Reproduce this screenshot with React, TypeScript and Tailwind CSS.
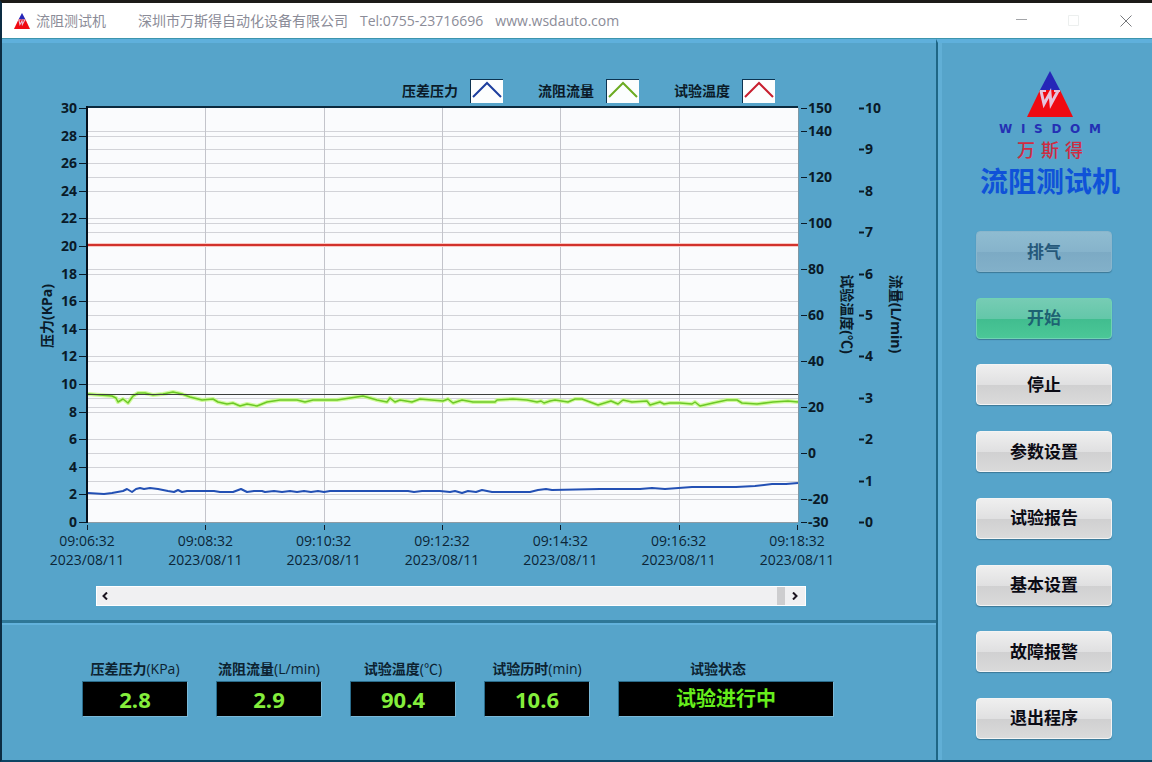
import React from "react";

const SANS = "font-['Open_Sans','Noto_Sans_CJK_SC',sans-serif]";

const legend = [
  { label: "压差压力", color: "#1d3f9e" },
  { label: "流阻流量", color: "#6cab22" },
  { label: "试验温度", color: "#c8202f" },
];

const readouts = [
  { id: "pressure", label: "压差压力", unit: "(KPa)", value: "2.8" },
  { id: "flow", label: "流阻流量", unit: "(L/min)", value: "2.9" },
  { id: "temperature", label: "试验温度", unit: "(℃)", value: "90.4" },
  { id: "elapsed", label: "试验历时", unit: "(min)", value: "10.6" },
];

const actions = [
  { label: "排气", kind: "disabled" },
  { label: "开始", kind: "running" },
  { label: "停止", kind: "normal" },
  { label: "参数设置", kind: "normal" },
  { label: "试验报告", kind: "normal" },
  { label: "基本设置", kind: "normal" },
  { label: "故障报警", kind: "normal" },
  { label: "退出程序", kind: "normal" },
];

const buttonStyles: Record<string, string> = {
  disabled:
    "border-[#8ab6cc] bg-[linear-gradient(#8fbcd1_0%,#86b3cb_50%,#7caac4_51%,#82b0c9_100%)] text-[#25587a]",
  running:
    "border-[#6fd3b3] bg-[linear-gradient(#76ccb4_0%,#64c7a9_50%,#41bd8f_51%,#4bc797_100%)] text-[#1d6272]",
  normal:
    "border-[#f4f4f4] bg-[linear-gradient(#efefef_0%,#e0e0e1_50%,#d0d0d1_51%,#dadada_100%)] text-[#0b0b14]",
};

// Plot area
const LEFT = 88;
const RIGHT = 798;
const TOP = 108;
const BOTTOM = 522;
const HEIGHT = BOTTOM - TOP;

const pressureTicks = [0, 2, 4, 6, 8, 10, 12, 14, 16, 18, 20, 22, 24, 26, 28, 30];
const temperatureTicks = [-30, -20, 0, 20, 40, 60, 80, 100, 120, 140, 150];
const flowTicks = [0, 1, 2, 3, 4, 5, 6, 7, 8, 9, 10];
const times = ["09:06:32", "09:08:32", "09:10:32", "09:12:32", "09:14:32", "09:16:32", "09:18:32"];

const pressureY = (v: number) => BOTTOM - (v / 30) * HEIGHT;
const temperatureY = (v: number) => BOTTOM - ((v + 30) / 180) * HEIGHT;
const flowY = (v: number) => BOTTOM - (v / 10) * HEIGHT;
const timeX = (i: number) => LEFT + (i * (RIGHT - LEFT)) / 6;

const gridLines = [
  ...pressureTicks.map(pressureY),
  ...temperatureTicks.map(temperatureY),
  ...flowTicks.map(flowY),
].filter((y) => y > TOP + 1 && y < BOTTOM - 1);

const flowLine =
  "88,394 100,395 112,396 116,398 118,402 123,399 128,403 133,396 138,393 145,393 153,395 163,394 173,392 182,394 190,397 202,400 213,399 218,402 227,404 233,403 240,406 247,404 257,406 267,402 280,400 297,400 305,402 313,400 337,400 350,398 363,396 377,400 387,402 390,398 395,402 400,400 412,402 420,399 443,401 448,399 453,403 462,400 473,402 495,402 497,400 513,399 527,400 537,402 541,401 544,403 550,401 555,400 568,402 575,399 582,399 590,402 598,405 611,401 618,404 623,400 632,402 647,401 650,405 660,402 664,404 670,403 680,403 692,404 695,402 700,406 713,403 727,400 737,400 742,403 757,404 773,402 788,401 798,402";

const pressureLine =
  "88,493 104,494 112,493 123,491 127,489 132,492 136,489 140,488 144,489 150,488 158,489 168,491 174,492 178,490 182,492 187,491 214,491 220,492 233,492 241,489 247,492 254,491 262,491 265,492 274,491 282,492 290,491 297,492 304,491 311,492 318,491 324,492 330,491 408,491 414,492 422,491 440,491 450,492 455,491 462,493 468,491 476,492 482,490 492,492 530,492 538,490 546,489 552,490 600,489 640,489 652,488 665,489 692,487 736,487 755,486 772,484 786,484 798,483";

const Chart = () => (
  <svg viewBox="2 103 934 469" className="block w-full overflow-visible text-[14px]" role="img" aria-label="压力 / 试验温度 / 流量">
    <rect x={LEFT} y={TOP} width={RIGHT - LEFT} height={HEIGHT} fill="#fafbfd" />

    {gridLines.map((y, i) => (
      <line key={i} x1={LEFT} x2={RIGHT} y1={Math.round(y) + 0.5} y2={Math.round(y) + 0.5} stroke="#d2d3d8" />
    ))}
    {[1, 2, 3, 4, 5].map((i) => (
      <line key={i} x1={Math.round(timeX(i)) - 0.5} x2={Math.round(timeX(i)) - 0.5} y1={TOP} y2={BOTTOM} stroke="#c3c4cb" />
    ))}

    {/* Temperature */}
    <line x1={LEFT} x2={RIGHT} y1={245} y2={245} stroke="#f9c9c4" strokeWidth={4} />
    <line x1={LEFT} x2={RIGHT} y1={245} y2={245} stroke="#d2322c" strokeWidth={2} />

    {/* Flow */}
    <polyline points={flowLine} fill="none" stroke="#c6fb84" strokeWidth={4} strokeLinejoin="round" opacity={0.8} />
    <polyline points={flowLine} fill="none" stroke="#6cc926" strokeWidth={1.5} strokeLinejoin="round" />
    <line x1={LEFT} x2={RIGHT} y1={394.5} y2={394.5} stroke="#3c3f3c" />

    {/* Pressure */}
    <polyline points={pressureLine} fill="none" stroke="#2350b4" strokeWidth={2} strokeLinejoin="round" />

    {/* Frame */}
    <line x1={LEFT} x2={RIGHT} y1={BOTTOM + 0.5} y2={BOTTOM + 0.5} stroke="#8d9ba4" />
    <line x1={RIGHT + 0.5} x2={RIGHT + 0.5} y1={TOP} y2={BOTTOM} stroke="#7f98a5" />
    <path d={`M${RIGHT} ${TOP - 1}H${LEFT - 1}`} stroke="#0b2a3e" strokeWidth={2} />
    <path d={`M${LEFT - 1} ${TOP - 2}V${BOTTOM + 1}`} stroke="#05101c" strokeWidth={2} />

    <g fontWeight={700} fill="#0a1a28">
      {pressureTicks.map((v) => (
        <g key={v}>
          <path d={`M79 ${Math.round(pressureY(v)) + 0.5}h7`} stroke="#0a1a28" />
          <text x={77} y={pressureY(v) + 5} textAnchor="end">{v}</text>
        </g>
      ))}
      {temperatureTicks.map((v) => (
        <g key={v}>
          <path d={`M801 ${Math.round(temperatureY(v)) + 0.5}h6`} stroke="#0a1a28" />
          <text x={808} y={temperatureY(v) + 5}>{v}</text>
        </g>
      ))}
      {flowTicks.map((v) => (
        <g key={v}>
          <path d={`M859 ${Math.round(flowY(v)) + 0.5}h5`} stroke="#0a1a28" strokeWidth={2} />
          <text x={865} y={flowY(v) + 5}>{v}</text>
        </g>
      ))}
      <g textAnchor="middle">
        <text transform="translate(52 316) rotate(-90)">压力(KPa)</text>
        <text transform="translate(842 314) rotate(90)">试验温度(℃)</text>
        <text transform="translate(891 314) rotate(90)">流量(L/min)</text>
      </g>
    </g>

    <g fill="#0c2536" textAnchor="middle">
      {times.map((t, i) => (
        <g key={t}>
          <path d={`M${Math.round(timeX(i)) - 0.5} 525v5`} stroke="#0a1a28" />
          <text x={timeX(i) - 1} y={546}>{t}</text>
          <text x={timeX(i) - 1} y={565}>2023/08/11</text>
        </g>
      ))}
    </g>
  </svg>
);

const Logo = ({ className }: { className: string }) => (
  <svg viewBox="0 0 46 46" className={className} aria-hidden="true">
    <path d="M23 0 33 19H13Z" fill="#2527b8" />
    <path d="M13 19H33L46 46H0Z" fill="#f00a12" />
    <path d="M14 20l3 13 6-11 1 11 7-13" fill="none" stroke="#e6c4dc" strokeWidth={3} />
    <path d="M13 20h6M27 20h6" stroke="#e6c4dc" strokeWidth={2} />
  </svg>
);

const TitleBar = () => (
  <header className="flex h-9 items-center border-b border-[#3d95ad] bg-white pl-3 text-[14px] text-[#8b8c98]">
    <Logo className="h-4 w-4" />
    <h1 className="ml-1.5">流阻测试机</h1>
    <span className="ml-8">深圳市万斯得自动化设备有限公司</span>
    <span className="ml-3">Tel:0755-23716696</span>
    <span className="ml-3">www.wsdauto.com</span>
    <div className="ml-auto flex">
      <button aria-label="最小化" className="flex h-8 w-[52px] items-center justify-center">
        <svg viewBox="0 0 12 12" className="h-3 w-3"><path d="M0 4.500h11" stroke="#a3a5a8" /></svg>
      </button>
      <button aria-label="最大化" disabled className="flex h-8 w-[52px] items-center justify-center">
        <svg viewBox="0 0 12 12" className="h-3 w-3"><path d="M.5 .5h10v10H.5z" fill="none" stroke="#ecefee" /></svg>
      </button>
      <button aria-label="关闭" className="flex h-8 w-[52px] items-center justify-center">
        <svg viewBox="0 0 12 12" className="h-3 w-3"><path d="M.5 .5l11 11M11.5 .5l-11 11" stroke="#77797c" /></svg>
      </button>
    </div>
  </header>
);

const App = () => {
  return (
    <div className={`${SANS} flex min-h-screen flex-col border-t-3 border-b-2 border-l-2 border-t-[#1d1b18] border-b-[#0d4564] border-l-[#0c2c42] bg-[#56a4ca]`}>
      <TitleBar />

      <div className="flex flex-1">
        <main className="flex min-w-0 flex-1 flex-col">
          {/* Trend chart */}
          <section className="border-t-4 border-b-3 border-t-[#5fb0dc] border-b-[#2f7797] pt-9 pb-3.5">
            <div className="flex justify-end gap-[35px] pr-[161px]">
              {legend.map((item) => (
                <div key={item.label} className="flex items-center gap-3 text-[14px] leading-6 font-bold text-[#0a1a28]">
                  {item.label}
                  <svg viewBox="0 0 33 24" className="h-6 w-[33px]">
                    <rect width="33" height="24" fill="#0d3350" />
                    <rect x="1" y="1" width="32" height="23" fill="#fcfefe" />
                    <path d="M3 18 17 4l14 14" fill="none" stroke={item.color} strokeWidth={2} />
                  </svg>
                </div>
              ))}
            </div>

            <Chart />

            <div className="mt-3.5 mr-[130px] ml-[94px] flex h-5 items-center border border-white bg-[#f0f0f2]">
              <button aria-label="向左" className="flex h-full w-4 items-center justify-center">
                <svg viewBox="0 0 6 8" className="h-2 w-1.5"><path d="M5 .5 1.500 4 5 7.500" fill="none" stroke="#1c1420" strokeWidth={2} /></svg>
              </button>
              <div className="flex h-full flex-1 justify-end">
                <div className="h-full w-2 bg-[#cdcdcf]" />
              </div>
              <button aria-label="向右" className="flex h-full w-5 items-center justify-center">
                <svg viewBox="0 0 6 8" className="h-2 w-1.5"><path d="M1 .5 4.500 4 1 7.500" fill="none" stroke="#1c1420" strokeWidth={2} /></svg>
              </button>
            </div>
          </section>

          {/* Readouts */}
          <section className="flex flex-1 gap-7 border-t-2 border-[#63b2dc] pt-8 pl-20">
            {readouts.map((item) => (
              <div key={item.id} className="flex w-[106px] flex-col items-center">
                <label htmlFor={item.id} className="text-[14px] leading-6 whitespace-nowrap text-[#0c2230]">
                  <span className="font-bold">{item.label}</span>
                  {item.unit}
                </label>
                <output
                  id={item.id}
                  className="flex h-9 w-full items-center justify-center border border-t-[#2a6c8b] border-r-[#7ab9d8] border-b-[#7ab9d8] border-l-[#2a6c8b] bg-black text-[22px] leading-8 font-bold text-[#84ee3c]"
                >
                  {item.value}
                </output>
              </div>
            ))}
            <div className="flex w-[216px] flex-col items-center">
              <label htmlFor="status" className="pr-4 text-[14px] leading-6 font-bold text-[#0c2230]">
                试验状态
              </label>
              <output
                id="status"
                className="flex h-9 w-full items-center justify-center border border-t-[#2a6c8b] border-r-[#7ab9d8] border-b-[#7ab9d8] border-l-[#2a6c8b] bg-black text-[20px] leading-8 font-bold text-[#66ee1c]"
              >
                试验进行中
              </output>
            </div>
          </section>
        </main>

        <aside className="flex w-[216px] shrink-0 flex-col items-center border-t-4 border-l-2 border-t-[#5fb0dc] border-l-[#1f6685] pt-7 pr-0.5 pb-[21px] shadow-[inset_4px_0_0_#61afd6]">
          <div className="flex flex-col items-center pl-3">
            <Logo className="h-[46px] w-[46px]" />
            <div className="mt-1 flex w-[102px] justify-between font-['DejaVu_Sans'] text-[12px] leading-4 font-bold text-[#2430b4]">
              {"WISDOM".split("").map((c, i) => (
                <span key={i}>{c}</span>
              ))}
            </div>
            <div className="flex gap-1.5 font-['Noto_Sans_CJK_SC',sans-serif] text-[18px] leading-6 font-medium text-[#cf2c42]">
              {"万斯得".split("").map((c) => (
                <span key={c}>{c}</span>
              ))}
            </div>
            <h2 className="text-[28px] leading-10 font-bold text-[#0f52d8]">流阻测试机</h2>
          </div>

          <nav className="mt-[30px] flex flex-1 flex-col justify-between gap-3">
            {actions.map((a) => (
              <button
                key={a.label}
                disabled={a.kind === "disabled"}
                className={`h-[41px] w-[136px] rounded border text-[17px] leading-6 font-bold shadow-[0_1px_1px_0_#3c7896] ${buttonStyles[a.kind]}`}
              >
                {a.label}
              </button>
            ))}
          </nav>
        </aside>
      </div>
    </div>
  );
};

export default App;
